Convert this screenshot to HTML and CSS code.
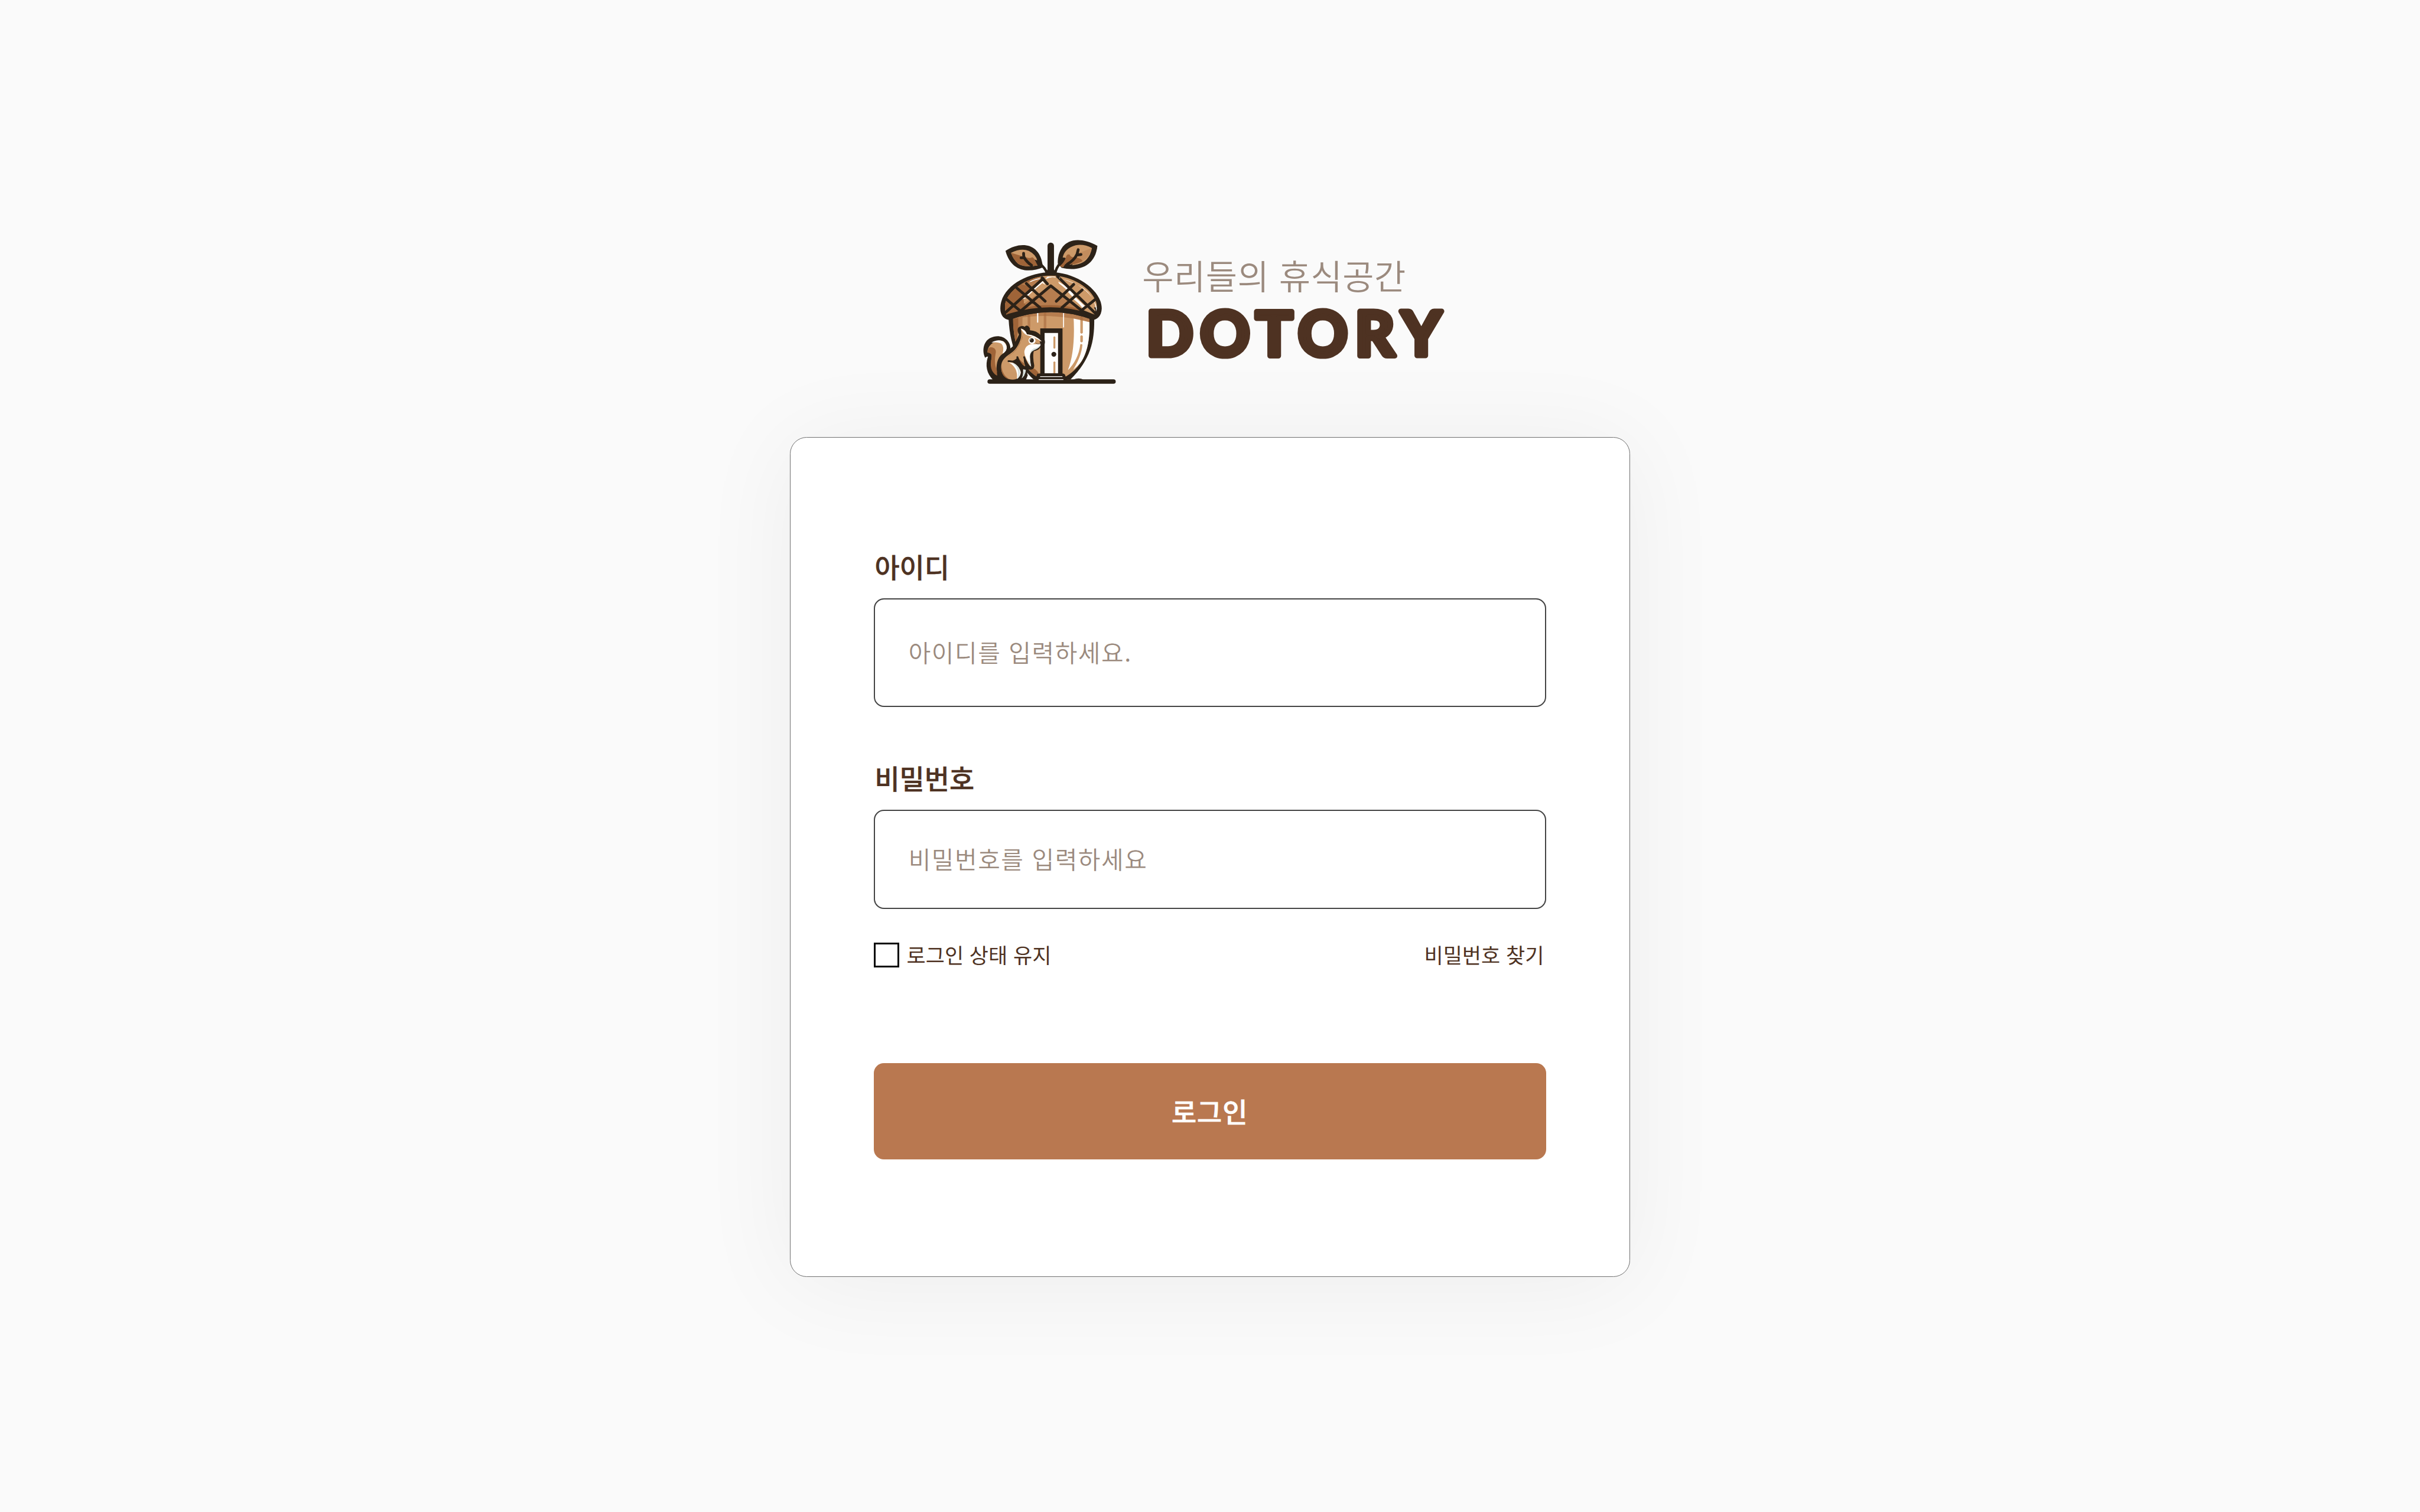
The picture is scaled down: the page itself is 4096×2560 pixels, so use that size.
FILE: index.html
```
<!DOCTYPE html>
<html lang="ko">
<head>
<meta charset="utf-8">
<title>DOTORY</title>
<link rel="stylesheet" href="styles.css">
</head>
<body>
<main class="page">
  <header class="brand">
    <svg class="brand-mark" viewBox="0 0 1080 1140" aria-hidden="true">
      <defs>
        <clipPath id="cap"><path d="M215 540C215 440 370 318 545 318C720 318 872 440 872 545C872 575 865 600 855 600Q545 500 228 600Q215 580 215 540Z"/></clipPath>
        <clipPath id="nut"><path d="M272 620Q545 540 818 620C825 800 800 950 650 1040H440C320 960 275 800 272 620Z"/></clipPath>
      </defs>

      <!-- ground -->
      <path class="fill-ink" d="M106 1060H990A15 15 0 0 1 990 1092H106A15 15 0 0 1 106 1060Z"/>
      <path class="fill-ink" d="M700 1062Q745 1046 775 1062Z"/>

      <!-- nut body -->
      <path class="fill-ink" d="M240 600L852 600C856 760 842 905 682 1062H420C300 950 245 800 240 600Z"/>
      <g clip-path="url(#nut)">
        <rect class="fill-tan" x="240" y="540" width="620" height="520"/>
        <path class="fill-rust" d="M260 560H318V660C305 700 310 760 290 800L260 700Z"/>
        <path class="fill-clay" d="M310 600H340V700H310Z"/>
        <path class="fill-clay" d="M377 590H396V700H377ZM492 580H510V700H492Z"/>
        <path class="fill-white" d="M704 600H830V800Q790 930 690 1000L665 992Q720 850 704 600Z"/>
        <path class="fill-tan" d="M753 810Q758 804 768 812Q762 900 690 1010L660 1000Q740 920 753 810Z"/>
        <path class="fill-tan" d="M753 600H771V728Q762 740 753 728ZM753 752Q762 740 771 752V790Q762 802 753 790Z"/>
        <path class="fill-clay" d="M260 630Q545 575 830 655V560H260Z"/>
        <path class="fill-rust" d="M377 590H396V613L377 615ZM492 582H510V608H492ZM753 600H771V640L753 636Z" opacity=".45"/>
        <path class="fill-white" d="M444 584H453V652Q448 660 444 652ZM630 584H637V688Q633 694 630 688Z"/>
        <path class="fill-rust" d="M385 985Q420 965 455 1015L440 1040L400 1010Z"/>
      </g>

      <!-- door -->
      <path class="fill-ink" d="M467 696H626V1018Q650 1020 646 1045L660 1066H430L446 1020L467 1018Z"/>
      <path class="fill-white" d="M498 729H594V1017H498ZM466 1038H625V1043H466ZM456 1059H632V1064H456Z"/>
      <rect class="fill-tan" x="561" y="753" width="14" height="88" rx="7"/>
      <path class="fill-tan" d="M561 938Q568 926 575 938V1017H561Z"/>
      <circle class="fill-ink" cx="564" cy="881" r="17.5"/>

      <!-- cap -->
      <path class="fill-ink" d="M182 555C182 400 370 296 545 294C720 296 906 420 906 555C904 610 870 636 842 635Q545 525 244 636C210 632 182 605 182 555Z"/>
      <g clip-path="url(#cap)">
        <path class="fill-tan" d="M200 300H900V545Q545 545 200 600Z"/>
        <path class="fill-tan" d="M700 500L860 560V600L760 560Z"/>
        <path class="fill-clay" d="M200 600V300H420L490 365L400 470L540 390L660 480L760 560Q545 520 230 600Z"/>
        <path class="fill-rust" d="M200 620V380L465 335L462 350L385 460L345 490L375 560L230 600Z"/>
        <path class="fill-clay" d="M330 380L470 340L440 372L400 400Z"/>
        <path class="fill-tan" d="M350 480L510 335L575 330L620 400L545 385L350 520Z"/>
        <path class="fill-rust" d="M340 552Q545 506 740 556L750 570L330 570Z"/>
        <path class="fill-white" d="M505 340L520 326H570L580 334Q545 324 512 342ZM400 364Q440 346 465 344L462 338Q420 345 385 366ZM420 412L484 358L505 386L482 372L424 422ZM370 458L410 426L412 432L380 464ZM338 488Q352 470 368 480Z"/>
        <path class="fill-white" d="M596 362Q680 410 705 450L700 466Q650 410 600 374ZM704 474L788 546L776 560L720 490ZM625 342Q830 400 875 560L868 575Q850 430 715 378Z"/>
        <path class="fill-tan" d="M716 380Q830 440 858 570L780 530L690 430Z"/>
        <path class="fill-white" d="M796 540Q830 550 845 575L830 572ZM690 440L706 458L700 474L650 420ZM720 476L790 540L778 552L704 486Z"/>
      </g>
      <path class="lattice" d="M222 580L488 340M330 570L542 392L765 570M228 490L325 572M300 408L465 548M368 376L502 502M480 335L518 378M582 502L706 382M622 548L766 422M765 565L856 492M590 325L862 590"/>
      <path class="fill-ink" d="M222 606Q225 595 240 592Q545 496 855 598Q870 590 872 560L900 590L842 635Q545 525 244 636Z"/>
      <circle class="fill-white" cx="606" cy="336" r="3"/>

      <!-- stem and leaves -->
      <path class="fill-ink" d="M519 106A23 23 0 0 1 565 106V275L584 310H500L519 275Z"/>
      <path class="twig" d="M470 240Q500 262 514 300M608 232Q582 262 574 300"/>
      <path class="fill-ink" d="M219 142C330 70 460 90 482 234L490 258C370 310 255 280 219 142Z"/>
      <path class="fill-tan" d="M258 156Q330 120 385 142Q440 170 446 215L452 246Q360 265 310 235Q275 205 258 156Z"/>
      <path class="fill-rust" d="M258 156L345 182Q400 200 410 188Q428 198 430 215L452 246Q360 262 310 235Q275 205 258 156Z"/>
      <path class="vein" d="M348 160Q348 182 352 190Q370 222 405 246M330 192L352 190"/>
      <path class="fill-ink" d="M426 205L450 212L470 240L450 250Z"/>
      <path class="fill-ink" d="M875 106C860 250 745 292 620 264L592 232C590 100 690 10 875 106Z"/>
      <path class="fill-tan" d="M836 122Q780 92 720 102Q640 125 627 190L645 192L620 250Q760 250 798 204Q828 170 836 122Z"/>
      <path class="fill-clay" d="M836 122L715 168L768 214Q820 190 836 122Z" opacity=".45"/>
      <path class="fill-rust" d="M650 190Q656 162 678 170Q680 190 720 190Q750 190 770 215Q720 245 665 236L633 262L604 252L628 228Z"/>
      <path class="vein" d="M738 134L730 166Q710 210 660 238M730 172L758 168"/>
      <path class="fill-ink" d="M618 200Q632 188 648 194Q640 222 608 250L596 235Z"/>
      <path class="fill-ink" d="M646 236Q680 245 700 235L680 268L630 262Z"/>

      <!-- squirrel -->
      <path class="fill-ink" d="M74 906C50 860 60 790 110 765C180 730 250 770 255 838Q290 800 315 740Q290 690 330 680Q345 678 356 684Q370 668 386 684Q396 695 394 710Q440 712 470 745Q505 770 500 800Q498 820 468 830Q460 850 420 860Q412 900 424 960Q425 990 400 990L375 990Q372 1020 378 1030L365 1064H130C85 1020 72 960 94 898Q82 896 74 906Z"/>
      <path class="fill-white" d="M254 838Q258 815 266 810L272 824Z"/>
      <path class="fill-tan" d="M90 868C90 820 130 790 175 782Q225 786 228 830Q224 860 196 880C160 905 148 960 158 1032C120 1010 110 960 120 900Q126 872 90 868Z"/>
      <path class="fill-rust" d="M90 868Q92 835 112 830Q150 832 150 865C140 920 140 950 158 1000V1034C115 1010 105 960 120 908Q128 872 90 868Z"/>
      <path class="fill-white" d="M118 797Q165 770 205 790Q240 825 222 855Q210 872 198 876Q212 830 190 806Q165 790 118 797Z"/>
      <path class="fill-tan" d="M328 697Q360 702 372 738Q430 740 478 790L466 804L470 816Q440 840 420 838L395 870Q385 910 400 972Q370 960 352 900Q345 930 360 965Q325 960 308 895Q290 930 250 930Q320 960 328 1010Q320 1060 270 1062C200 1060 180 1000 190 950C205 890 270 880 300 830C325 790 340 750 328 697Z"/>
      <path class="fill-rust" d="M338 745Q345 770 320 800Q300 860 230 900Q285 870 305 835Q335 790 338 745ZM308 900Q315 945 358 968L350 945Q325 930 308 900ZM352 900Q360 945 390 965L375 930ZM190 960Q195 1035 250 1060Q185 1050 190 960Z"/>
      <path class="fill-white" d="M328 697Q360 706 372 738Q440 745 480 792Q430 762 370 744Q350 735 328 697Z"/>
      <path class="fill-white" d="M470 804Q470 835 425 850C400 860 392 880 394 905Q395 940 402 970Q380 950 364 905Q345 870 360 840Q375 808 415 808Q440 812 470 804Z"/>
      <path class="fill-mint" d="M470 812Q465 835 425 850Q390 865 392 905Q388 860 420 840Q450 835 470 812ZM375 920Q385 950 402 970L397 945Z"/>
      <path class="fill-white" d="M240 938Q310 945 328 1010Q325 1040 300 1058Q310 975 240 938ZM345 988L364 992Q358 1040 328 1056Q344 1020 345 988Z"/>
      <path class="fill-mint" d="M262 938Q322 960 322 1015Q318 1040 304 1055Q328 985 262 938ZM350 990L364 992Q358 1040 328 1056Q350 1020 350 990Z"/>
      <path class="haunch" d="M240 930Q300 928 330 970Q348 1010 326 1056"/>
      <path class="haunch" d="M303 902Q318 945 350 975M352 902Q365 950 402 982"/>
      <circle class="fill-white" cx="408" cy="783" r="25"/>
      <circle class="fill-ink" cx="406" cy="782" r="15"/>
      <circle class="fill-white" cx="399" cy="776" r="3"/>
      <path class="fill-ink" d="M462 790L498 785V812L468 806Z"/>
      <path class="mouth" d="M434 800Q446 812 470 806"/>
      <path class="fill-white" d="M374 1055Q388 1030 404 1055Z"/>
    </svg>
    <div class="brand-words">
      <p class="tagline">우리들의 휴식공간</p>
      <svg class="wordmark" viewBox="0 0 720 150" role="img" aria-label="DOTORY">
        <text class="wordmark-text" y="126.5" x="8.7 137 269.3 370 505.6 616">DOTORY</text>
      </svg>
    </div>
  </header>

  <form class="card">
    <label class="label" for="user-id">아이디</label>
    <input class="field field-id" id="user-id" type="text" placeholder="아이디를 입력하세요.">
    <label class="label label-pw" for="user-pw">비밀번호</label>
    <input class="field field-pw" id="user-pw" type="password" placeholder="비밀번호를 입력하세요">
    <div class="options">
      <label class="keep"><input class="check" type="checkbox"><span>로그인 상태 유지</span></label>
      <a class="find">비밀번호 찾기</a>
    </div>
    <button class="submit" type="button">로그인</button>
  </form>
</main>
</body>
</html>
```
FILE: styles.css
```
/* 1rem is 100 units of the 5760-unit design grid */
html {
  font-size: calc(100vw / 57.6);
}

* {
  box-sizing: border-box;
  margin: 0;
  padding: 0;
}

body {
  background: #fafafa;
  color: #4e3222;
  font-family: "Noto Sans CJK KR", sans-serif;
}

.page {
  display: flex;
  flex-direction: column;
  align-items: center;
  height: 36rem;
  padding-top: 5.5rem;
  overflow: hidden;
}

.brand {
  display: flex;
  gap: 0.4rem;
  height: 3.8rem;
  margin-bottom: 1.1rem;
}

.brand-mark {
  width: 3.6rem;
  height: 3.8rem;
}

.brand-words {
  display: flex;
  flex-direction: column;
  width: 7.2rem;
  padding-top: 0.449rem;
}

.tagline {
  height: 1.251rem;
  margin-left: -0.015rem;
  color: #9b8a7e;
  font-size: 0.814rem;
  font-weight: 350;
  line-height: 1.2rem;
  letter-spacing: 0.007rem;
  white-space: nowrap;
}

.wordmark {
  width: 7.2rem;
  height: 1.5rem;
}

.wordmark-text {
  fill: #4e3222;
  stroke: #4e3222;
  stroke-width: 13;
  stroke-linejoin: round;
  font-family: Lato, sans-serif;
  font-size: 146px;
  font-weight: 700;
}

.fill-ink { fill: #2c2218; }
.fill-tan { fill: #cd9a69; }
.fill-clay { fill: #b67d4f; }
.fill-rust { fill: #9f6438; }
.fill-white { fill: #fffefc; }
.fill-mint { fill: #d5dfdc; }

.lattice,
.twig,
.vein,
.haunch,
.mouth {
  fill: none;
  stroke: #2c2218;
  stroke-linecap: round;
  stroke-linejoin: round;
}

.lattice { stroke-width: 20; }
.twig { stroke-width: 18; }
.vein { stroke-width: 20; }
.haunch { stroke-width: 13; }
.mouth { stroke-width: 3; }

.card {
  display: flex;
  flex-direction: column;
  width: 20rem;
  height: 20rem;
  padding: calc(2.4rem - 1px) calc(2rem - 1px) 0;
  border: 1px solid #707070;
  border-radius: 0.4rem;
  background: #fff;
  box-shadow: 0 0.16rem 2.4rem rgba(0, 0, 0, 0.056);
}

.label {
  height: 1.44rem;
  padding: 0.165rem 0 0 0.018rem;
  font-size: 0.645rem;
  font-weight: 500;
  line-height: 1.04rem;
  -webkit-text-stroke: 0.006rem #4e3222;
}

.label-pw {
  margin-top: 1rem;
}

.field {
  width: 16rem;
  padding: 0 0.795rem 0.035rem;
  border: 2px solid #444;
  border-radius: 0.24rem;
  background: #fff;
  font-family: inherit;
  font-size: 0.575rem;
  letter-spacing: 0.022rem;
}

.field::placeholder {
  color: #9b8a7e;
  font-weight: 350;
  opacity: 1;
}

.field-id { height: 2.6rem; }
.field-pw { height: 2.36rem; }

.options {
  display: flex;
  align-items: center;
  justify-content: space-between;
  height: 0.6rem;
  margin-top: 0.8rem;
  font-size: 0.492rem;
}

.options span,
.find {
  padding-bottom: 0.05rem;
}

.find {
  padding-right: 0.05rem;
}

.keep {
  display: flex;
  align-items: center;
  gap: 0.18rem;
}

.check {
  appearance: none;
  width: 0.6rem;
  height: 0.6rem;
  border: 3px solid #000;
  background: #fff;
}

.submit {
  height: 2.28rem;
  margin-top: 2.28rem;
  padding: 0 0.01rem 0.04rem 0;
  border: 0;
  border-radius: 0.24rem;
  background: #b97850;
  color: #fff;
  font-family: inherit;
  font-size: 0.645rem;
  font-weight: 500;
  letter-spacing: 0.012rem;
  -webkit-text-stroke: 0.01rem #fff;
}
```
